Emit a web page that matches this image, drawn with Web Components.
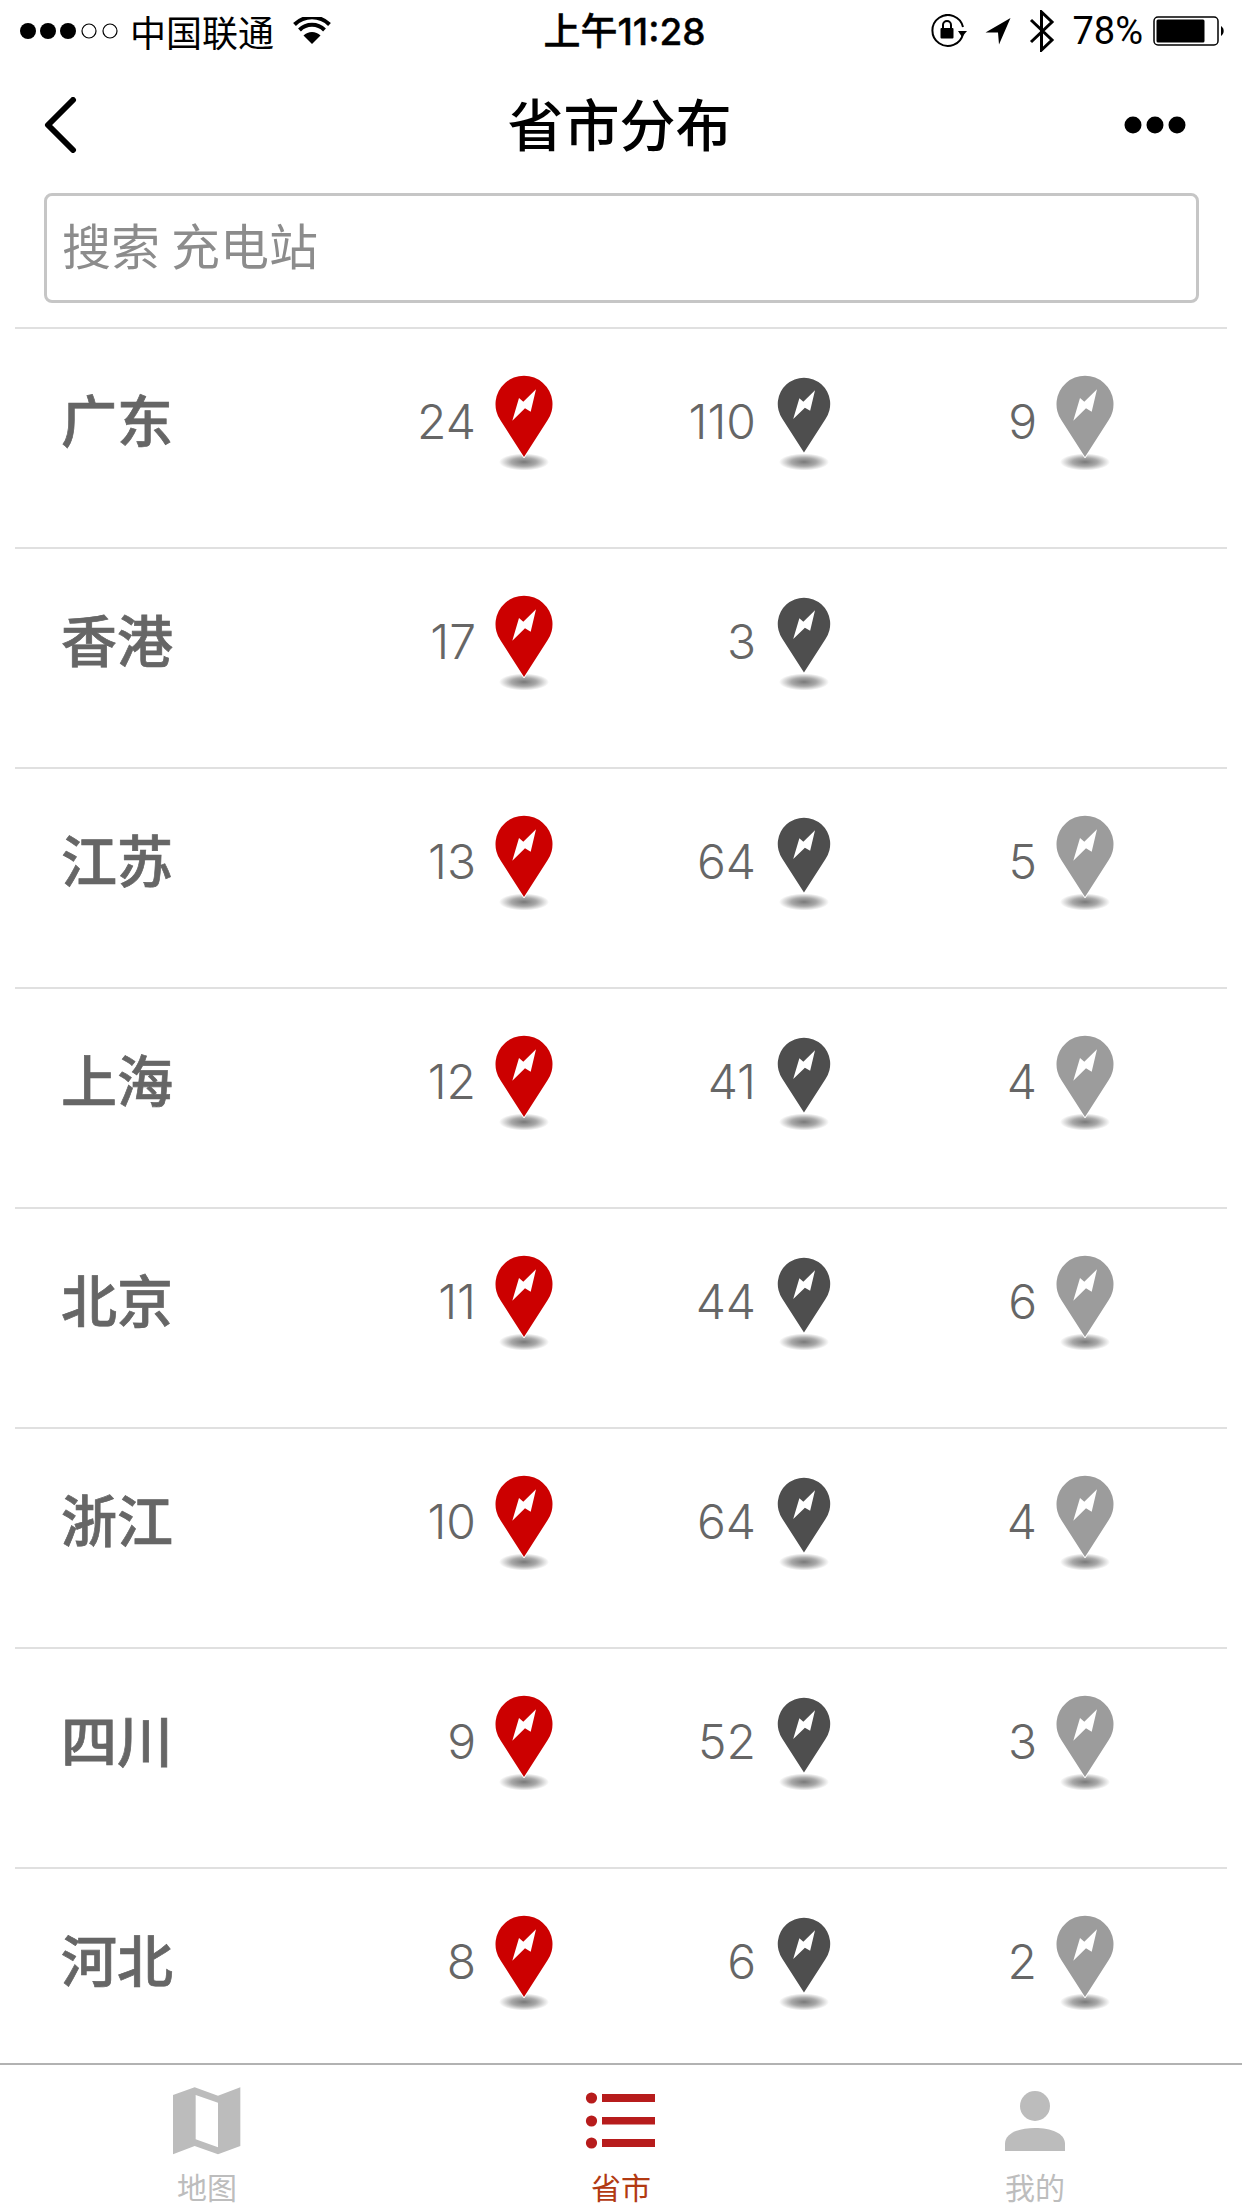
<!DOCTYPE html>
<html lang="zh-CN">
<head>
<meta charset="utf-8">
<title>省市分布</title>
<style>
html,body{margin:0;padding:0;background:#fff;width:1242px;height:2208px;overflow:hidden}
body{font-family:"Noto Sans CJK SC","Noto Sans",sans-serif}
</style>
</head>
<body>
<app-shell>
  <status-bar></status-bar>
  <nav-bar title="省市分布"></nav-bar>
  <search-box placeholder="搜索 充电站"></search-box>
  <province-list>
    <province-row name="广东" counts="24,110,9"></province-row>
    <province-row name="香港" counts="17,3,"></province-row>
    <province-row name="江苏" counts="13,64,5"></province-row>
    <province-row name="上海" counts="12,41,4"></province-row>
    <province-row name="北京" counts="11,44,6"></province-row>
    <province-row name="浙江" counts="10,64,4"></province-row>
    <province-row name="四川" counts="9,52,3"></province-row>
    <province-row name="河北" counts="8,6,2"></province-row>
  </province-list>
  <tab-bar>
    <tab-item label="地图" icon="map"></tab-item>
    <tab-item label="省市" icon="list" active></tab-item>
    <tab-item label="我的" icon="user"></tab-item>
  </tab-bar>
</app-shell>
<script>
const CJK = '"Noto Sans CJK SC","Noto Sans",sans-serif';

class Base extends HTMLElement {
  connectedCallback(){
    if(this.shadowRoot) return;
    this.attachShadow({mode:'open'}).innerHTML=this.render();
    if(this.ready) this.ready(this.shadowRoot);
  }
}

class AppShell extends Base {
  render(){return `<style>
    :host{display:flex;flex-direction:column;width:1242px;height:2208px;overflow:hidden;background:#fff;font-family:${CJK}}
  </style><slot></slot>`;}
}

class StatusBar extends Base {
  render(){return `<style>
    :host{display:grid;grid-template-columns:1fr auto 1fr;align-items:center;height:60px;color:#000;flex:none}
    .l,.r{display:flex;align-items:center}
    .l{padding-left:19px}
    .r{justify-content:flex-end;padding-right:16px}
    svg{display:block;flex:none}
    .carrier{font-size:36px;line-height:60px;margin-left:9px;font-weight:400;margin-top:-1px}
    .wifi{margin-left:19px}
    .time{font:500 37px/60px "Noto Sans CJK SC",sans-serif;padding-left:7px;white-space:nowrap;-webkit-text-stroke:.4px #000;margin-top:-1px}
    .time b{font:500 37px/60px Inter,"Liberation Sans",sans-serif}
    .pct{font:400 38px/60px Roboto,"Liberation Sans",sans-serif;margin:0 10px 0 17px}
    .arrow{margin-left:18px}.bt{margin-left:18px}
  </style>
  <div class="l">
    <svg width="102" height="18" viewBox="0 0 102 18">
      <circle cx="9" cy="9" r="8"/><circle cx="29" cy="9" r="8"/><circle cx="49" cy="9" r="8"/>
      <circle cx="70" cy="9" r="7" fill="none" stroke="#000" stroke-width="1.2"/><circle cx="91" cy="9" r="7" fill="none" stroke="#000" stroke-width="1.2"/>
    </svg>
    <span class="carrier">中国联通</span>
    <svg class="wifi" width="38" height="28" viewBox="0 0 38 28">
      <path d="M19 27 L10.5 18.5 A12 12 0 0 1 27.5 18.5 Z"/>
      <path d="M6.5 13 A17.6 17.6 0 0 1 31.5 13" fill="none" stroke="#000" stroke-width="4"/>
      <path d="M1.5 7.5 A25 25 0 0 1 36.5 7.5" fill="none" stroke="#000" stroke-width="4"/>
    </svg>
  </div>
  <div class="time">上午<b>11:28</b></div>
  <div class="r">
    <svg width="36" height="34" viewBox="0 0 36 34">
      <path d="M32 20 A15.5 15.5 0 1 1 32 13" fill="none" stroke="#000" stroke-width="2"/>
      <path d="M36 17 L31 23 L27 17 Z"/>
      <rect x="9.5" y="14" width="13" height="10.5" rx="1"/>
      <path d="M12 14 V11 A4 4 0 0 1 20 11 V14" fill="none" stroke="#000" stroke-width="2"/>
    </svg>
    <svg class="arrow" width="26" height="28" viewBox="0 0 26 28"><path d="M25.5 1 L0.5 15.5 L13 15.5 L14 27.5 Z"/></svg>
    <svg class="bt" width="26" height="42" viewBox="0 0 26 42"><path d="M2 10 L23 30 L12.5 40 V2 L23 12 L2 32" fill="none" stroke="#000" stroke-width="3"/></svg>
    <span class="pct">78%</span>
    <svg width="73" height="30" viewBox="0 0 73 30">
      <rect x="1" y="1" width="64" height="28" rx="4" fill="none" stroke="#000" stroke-width="1.5"/>
      <rect x="3.5" y="3.5" width="48" height="23" rx="1.5"/>
      <path d="M68 10 A6 6 0 0 1 68 20 Z"/>
    </svg>
  </div>`;}
}

class NavBar extends Base {
  render(){return `<style>
    :host{display:grid;grid-template-columns:1fr auto 1fr;align-items:center;height:129px;flex:none;box-sizing:border-box;color:#000}
    .back{padding-left:43px}
    .more{display:flex;justify-content:flex-end;padding-right:55px}
    svg{display:block}
    h1{margin:-6px 3px 0 0;font:500 56px/1 ${CJK};color:#000}
  </style>
  <div class="back"><svg width="36" height="56" viewBox="0 0 36 56"><path d="M30 3 L5 28 L30 53" fill="none" stroke="#000" stroke-width="6" stroke-linecap="round" stroke-linejoin="round"/></svg></div>
  <h1></h1>
  <div class="more"><svg width="64" height="20" viewBox="0 0 64 20"><circle cx="10" cy="10" r="8.5"/><circle cx="32" cy="10" r="8.5"/><circle cx="54" cy="10" r="8.5"/></svg></div>`;}
  ready(r){r.querySelector('h1').textContent=this.getAttribute('title');}
}

class SearchBox extends Base {
  render(){return `<style>
    :host{display:block;flex:none;margin:4px 0 0 44px;width:1155px;height:110px;box-sizing:border-box;border:3px solid #c6c6c6;border-radius:8px;padding-left:15px;font:400 49px/96px ${CJK};color:#8c8c8c}
  </style><span></span>`;}
  ready(r){r.querySelector('span').textContent=this.getAttribute('placeholder');}
}

class ProvinceList extends Base {
  render(){return `<style>
    :host{display:block;flex:1 1 0;min-height:0;overflow:hidden;margin:24px 15px 0}
  </style><slot></slot>`;}
}

class MapPin extends Base {
  render(){
    const k=this.getAttribute('kind')||'red';
    const fill={red:'#cc0000',dark:'#4e4e4e',light:'#9c9c9c'}[k];
    const tf=k==='dark'?'translate(2.3 2) scale(.92)':'';
    const id='s'+k;
    return `<style>
      :host{display:block;width:60px;height:94px;flex:none}
      svg{display:block;filter:blur(.4px);overflow:visible}
    </style>
    <svg width="60" height="94" viewBox="0 0 60 94">
      <defs><radialGradient id="${id}"><stop offset="0" stop-color="#7a7a7a"/><stop offset=".5" stop-color="#a8a8a8"/><stop offset="1" stop-color="#fff"/></radialGradient></defs>
      <ellipse cx="29" cy="86" rx="25" ry="8.5" fill="url(#${id})"/>
      <g transform="${tf}">
        <path d="M29 81 L5.6 44.5 A28.5 28.5 0 1 1 52.4 44.5 Z" fill="${fill}" stroke="#fff" stroke-width="2" stroke-linejoin="round" paint-order="stroke"/>
        <path d="M24 22 L28.3 25.7 L41 13.3 L35.7 35.7 L30 32.3 L17.3 44.7 Z" fill="#fff"/>
      </g>
    </svg>`;}
}

class StationCount extends Base {
  render(){return `<style>
      :host{display:flex;align-items:center;justify-content:flex-end;gap:19px;font:300 48px/94px Inter,"Liberation Sans",sans-serif;color:#666}
      span{display:block;margin-top:-3px}
    </style><span></span><map-pin kind="${this.getAttribute('kind')}"></map-pin>`;}
  ready(r){r.querySelector('span').textContent=this.getAttribute('value');}
}

class ProvinceRow extends Base {
  render(){return `<style>
      :host{display:grid;grid-template-columns:1fr 280px 280px 281px;align-items:start;height:220px;box-sizing:border-box;border-top:2px solid #e0e0e0;padding:47px 111px 0 47px}
      .name{font:500 56px/94px ${CJK};color:#666;margin:-5px 0 0 -1px;white-space:nowrap;-webkit-text-stroke:.7px #666}
    </style><div class="name"></div>`;}
  ready(r){
    r.querySelector('.name').textContent=this.getAttribute('name');
    const kinds=['red','dark','light'];
    this.getAttribute('counts').split(',').forEach((c,i)=>{
      const cell=document.createElement(c?'station-count':'div');
      if(c){cell.setAttribute('value',c);cell.setAttribute('kind',kinds[i]);}
      r.appendChild(cell);
    });}
}

class TabBar extends Base {
  render(){return `<style>
    :host{display:grid;grid-template-columns:repeat(3,1fr);height:145px;box-sizing:border-box;flex:none;border-top:2px solid #b2b2b2;background:#fff;overflow:hidden}
  </style><slot></slot>`;}
}

const ICONS={
  map:`<svg width="68" height="68" viewBox="0 0 204 204"><path fill-rule="evenodd" fill="#bcbcbc" d="M0 24 L65 1 L135 26 L202 1 V177 L135 202 L65 177 L0 202 Z M68 24 V157 L135 181 V47 Z"/></svg>`,
  list:`<svg width="68" height="68" viewBox="0 0 68 68" fill="#b71c1c"><circle cx="4.5" cy="11" r="5.6"/><circle cx="4.5" cy="34" r="5.6"/><circle cx="4.5" cy="56" r="5.6"/><rect x="15" y="7" width="53" height="8"/><rect x="15" y="30" width="53" height="7.5"/><rect x="15" y="52" width="53" height="8"/></svg>`,
  user:`<svg width="68" height="68" viewBox="0 0 68 68" fill="#bcbcbc"><circle cx="34" cy="19" r="15"/><path d="M4 64 V57 C4 46 18 41 34 41 C50 41 64 46 64 57 V64 Z"/></svg>`
};

class TabItem extends Base {
  render(){
    const on=this.hasAttribute('active');
    return `<style>
      :host{display:flex;flex-direction:column;align-items:center;padding-top:22px;font:400 30px/32px ${CJK};color:${on?'#b23a12':'#bdbdbd'}}
      svg{display:block;overflow:visible}
      .ic{height:68px;margin-bottom:15px}
      .t{white-space:nowrap}
    </style><div class="ic">${ICONS[this.getAttribute('icon')]}</div><div class="t"></div>`;}
  ready(r){r.querySelector('.t').textContent=this.getAttribute('label');}
}

customElements.define('map-pin',MapPin);
customElements.define('station-count',StationCount);
customElements.define('province-row',ProvinceRow);
customElements.define('province-list',ProvinceList);
customElements.define('search-box',SearchBox);
customElements.define('nav-bar',NavBar);
customElements.define('status-bar',StatusBar);
customElements.define('tab-item',TabItem);
customElements.define('tab-bar',TabBar);
customElements.define('app-shell',AppShell);
</script>
</body>
</html>
